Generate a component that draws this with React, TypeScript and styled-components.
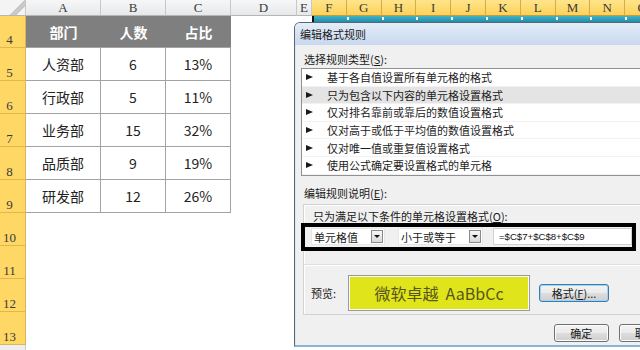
import React from "react";
import styled, { createGlobalStyle } from "styled-components";

const GlobalStyle = createGlobalStyle`
  html, body {
    margin: 0;
    padding: 0;
    background: #fff;
  }
  body {
    width: 640px;
    height: 350px;
    overflow: hidden;
    font-family: "Noto Sans CJK SC", "Liberation Sans", sans-serif;
  }
`;

type Column = { name: string; width: number; selected?: boolean };

const columns: Column[] = [
  { name: "A", width: 75 },
  { name: "B", width: 65 },
  { name: "C", width: 65 },
  { name: "D", width: 66 },
  { name: "E", width: 15 },
  ...["F", "G", "H", "I", "J", "K", "L", "M", "N", "O"].map((name) => ({
    name,
    width: 34.8,
    selected: true,
  })),
];

const rows = [
  { n: 4, h: 32 },
  { n: 5, h: 33 },
  { n: 6, h: 33 },
  { n: 7, h: 33 },
  { n: 8, h: 33 },
  { n: 9, h: 33 },
  { n: 10, h: 33 },
  { n: 11, h: 33 },
  { n: 12, h: 33 },
  { n: 13, h: 33 },
  { n: 14, h: 20, plain: true },
];

const tableData = [
  ["人资部", "6", "13%"],
  ["行政部", "5", "11%"],
  ["业务部", "15", "32%"],
  ["品质部", "9", "19%"],
  ["研发部", "12", "26%"],
];

const rules = [
  "基于各自值设置所有单元格的格式",
  "只为包含以下内容的单元格设置格式",
  "仅对排名靠前或靠后的数值设置格式",
  "仅对高于或低于平均值的数值设置格式",
  "仅对唯一值或重复值设置格式",
  "使用公式确定要设置格式的单元格",
];

export default function App() {
  return (
    <>
      <GlobalStyle />
      <Sheet>
        <ColumnBar>
          <Corner />
          {columns.map((c) => (
            <ColHead key={c.name} $width={c.width} $selected={c.selected}>
              {c.name}
            </ColHead>
          ))}
        </ColumnBar>
        <SheetBody>
          <RowBar>
            {rows.map((r) => (
              <RowHead key={r.n} $height={r.h} $plain={r.plain}>
                {r.n}
              </RowHead>
            ))}
          </RowBar>
          <CellArea>
            <DataTable>
              <HeadCell>部门</HeadCell>
              <HeadCell>人数</HeadCell>
              <HeadCell>占比</HeadCell>
              {tableData.map((row) =>
                row.map((v, i) => <Cell key={row[0] + i}>{v}</Cell>)
              )}
            </DataTable>
            <EmptyColumns />
            <SelectionStrip>
              {columns
                .filter((c) => c.selected)
                .map((c) => (
                  <StripSegment key={c.name} $width={c.width} />
                ))}
            </SelectionStrip>
          </CellArea>
        </SheetBody>

        <Dialog>
          <TitleBar>编辑格式规则</TitleBar>
          <DialogBody>
            <FieldLabel>
              选择规则类型(<u>S</u>):
            </FieldLabel>
            <RuleList>
              {rules.map((r, i) => (
                <RuleItem key={r} $active={i === 1}>
                  <Arrow />
                  {r}
                </RuleItem>
              ))}
            </RuleList>
            <FieldLabel $gap={9}>
              编辑规则说明(<u>E</u>):
            </FieldLabel>
            <RuleBox>
              <BoxLabel>
                只为满足以下条件的单元格设置格式(<u>O</u>):
              </BoxLabel>
              <ConditionRow>
                <Combo $width={74}>
                  <ComboText>单元格值</ComboText>
                  <DropButton />
                </Combo>
                <Combo $width={85}>
                  <ComboText>小于或等于</ComboText>
                  <DropButton />
                </Combo>
                <FormulaInput>=$C$7+$C$8+$C$9</FormulaInput>
              </ConditionRow>
              <Divider />
              <PreviewRow>
                <PreviewLabel>预览:</PreviewLabel>
                <PreviewSwatch>微软卓越&nbsp; AaBbCc</PreviewSwatch>
                <DialogButton $width={70} $focused>
                  格式(<u>F</u>)...
                </DialogButton>
              </PreviewRow>
            </RuleBox>
            <Footer>
              <DialogButton $width={65}>确定</DialogButton>
              <DialogButton $width={65}>取消</DialogButton>
            </Footer>
          </DialogBody>
        </Dialog>
      </Sheet>
    </>
  );
}

const Sheet = styled.div`
  position: relative;
  width: 640px;
  height: 350px;
  overflow: hidden;
  background: #fff;
`;

const ColumnBar = styled.div`
  display: flex;
  height: 16px;
  white-space: nowrap;
`;

const Corner = styled.div`
  flex: 0 0 26px;
  box-sizing: border-box;
  border-right: 1px solid #c8c8c8;
  border-bottom: 1px solid #b5b5b5;
  background: linear-gradient(135deg, #f4f4f4 62%, #c9c9c9 62%, #c9c9c9 78%, #f4f4f4 78%);
`;

const ColHead = styled.div<{ $width: number; $selected?: boolean }>`
  flex: 0 0 ${(p) => p.$width}px;
  box-sizing: border-box;
  height: 16px;
  border-right: 1px solid ${(p) => (p.$selected ? "#d8ab45" : "#c8c8c8")};
  border-bottom: 1px solid ${(p) => (p.$selected ? "#c99a38" : "#b5b5b5")};
  background: ${(p) =>
    p.$selected
      ? "linear-gradient(#ffe48a, #fbd35c)"
      : "linear-gradient(#f7f7f7, #e6e8eb)"};
  color: #3a3a3a;
  font-family: "Liberation Serif", "DejaVu Serif", serif;
  font-size: 13px;
  line-height: 16px;
  text-align: center;
`;

const SheetBody = styled.div`
  display: flex;
`;

const RowBar = styled.div`
  display: flex;
  flex-direction: column;
  flex: 0 0 26px;
`;

const RowHead = styled.div<{ $height: number; $plain?: boolean }>`
  box-sizing: border-box;
  height: ${(p) => p.$height}px;
  display: flex;
  align-items: flex-end;
  justify-content: center;
  padding: 0 6px 0 0;
  border-right: 1px solid ${(p) => (p.$plain ? "#c8c8c8" : "#e0b24c")};
  border-bottom: 1px solid ${(p) => (p.$plain ? "#c8c8c8" : "#e3b650")};
  background: ${(p) => (p.$plain ? "#eceef1" : "#fed764")};
  color: #3a3a3a;
  font-family: "Liberation Serif", "DejaVu Serif", serif;
  font-size: 13px;
  line-height: 15px;
`;

const CellArea = styled.div`
  display: flex;
  align-items: flex-start;
`;

const DataTable = styled.div`
  display: grid;
  grid-template-columns: 75px 65px 65px;
  grid-template-rows: 32px;
  grid-auto-rows: 33px;
  flex: 0 0 auto;
`;

const HeadCell = styled.div`
  box-sizing: border-box;
  display: flex;
  align-items: center;
  justify-content: center;
  background: #7f7f7f;
  border-bottom: 1px solid #a3a3a3;
  color: #fff;
  font-size: 14px;
  font-weight: 700;
`;

const Cell = styled.div`
  box-sizing: border-box;
  display: flex;
  align-items: center;
  justify-content: center;
  border-right: 1px solid #a3a3a3;
  border-bottom: 1px solid #a3a3a3;
  color: #222;
  font-size: 14px;
`;

const EmptyColumns = styled.div`
  flex: 0 0 81px;
`;

const SelectionStrip = styled.div`
  display: flex;
  height: 6px;
  border-left: 2px solid #111;
  box-sizing: border-box;
`;

const StripSegment = styled.div<{ $width: number }>`
  flex: 0 0 ${(p) => p.$width}px;
  height: 6px;
  background:
    linear-gradient(#ffffff, #ffffff) right 1px / 2px 3px no-repeat,
    linear-gradient(#43b3c9, #1f8ea8);
`;

const Dialog = styled.div`
  position: absolute;
  left: 294px;
  top: 22px;
  width: 380px;
  height: 325px;
  box-sizing: border-box;
  display: flex;
  flex-direction: column;
  border: 1px solid #56677c;
  border-bottom: 2px solid #86b5dd;
  border-top-left-radius: 6px;
  background: #f0f0f0;
  overflow: hidden;
  color: #1a1a1a;
  font-size: 11px;
`;

const TitleBar = styled.div`
  height: 22px;
  flex: 0 0 22px;
  display: flex;
  align-items: center;
  padding-left: 5px;
  background: linear-gradient(#e4edf8, #c8d8ed);
  color: #1b1b1b;
  font-size: 11px;
`;

const DialogBody = styled.div`
  flex: 1;
  display: flex;
  flex-direction: column;
  padding-left: 5px;
  border-left: 1px solid #dfe6ee;
`;

const FieldLabel = styled.div<{ $gap?: number }>`
  margin: ${(p) => p.$gap ?? 6}px 0 1px 3px;
  line-height: 16px;
  font-size: 11px;
`;

const RuleList = styled.div`
  width: 400px;
  border: 1px solid #8f9193;
  background: #fff;
`;

const RuleItem = styled.div<{ $active?: boolean }>`
  display: flex;
  align-items: center;
  height: 17.6px;
  box-sizing: border-box;
  padding-left: 4px;
  gap: 14px;
  border-bottom: 1px solid #f2f2f2;
  background: ${(p) => (p.$active ? "#e4e4e4" : "#fff")};
  font-size: 11px;
  color: #1c1c1c;
  white-space: nowrap;
`;

const Arrow = styled.span`
  width: 0;
  height: 0;
  border-top: 3.5px solid transparent;
  border-bottom: 3.5px solid transparent;
  border-left: 7px solid #1a1a1a;
`;

const RuleBox = styled.div`
  margin: 2px 0 0 2px;
  width: 400px;
  height: 111px;
  box-sizing: border-box;
  border: 1px solid #d3d3d3;
  box-shadow: inset 1px 1px 0 #fff;
  display: flex;
  flex-direction: column;
`;

const BoxLabel = styled.div`
  padding: 3px 0 0 9px;
  line-height: 16px;
  white-space: nowrap;
`;

const ConditionRow = styled.div`
  margin: -1px 0 0 -3px;
  width: 335px;
  height: 28px;
  box-sizing: border-box;
  border: 4px solid #000;
  display: flex;
  align-items: center;
  padding-left: 6px;
  gap: 13px;
`;

const Combo = styled.div<{ $width: number }>`
  width: ${(p) => p.$width}px;
  height: 17px;
  box-sizing: border-box;
  display: flex;
  align-items: center;
  justify-content: space-between;
  background: #fff;
  border: 1px solid #e6e6e6;
  padding-right: 1px;
`;

const ComboText = styled.span`
  padding-left: 2px;
  font-size: 11px;
  white-space: nowrap;
`;

const DropButton = styled.span`
  width: 12px;
  height: 13px;
  box-sizing: border-box;
  display: flex;
  align-items: center;
  justify-content: center;
  border: 1px solid #8a8a8a;
  background: linear-gradient(#f7f7f7, #d9d9d9);
  &::after {
    content: "";
    border-left: 3px solid transparent;
    border-right: 3px solid transparent;
    border-top: 3px solid #111;
  }
`;

const FormulaInput = styled.div`
  margin-left: -3px;
  width: 139px;
  height: 17px;
  box-sizing: border-box;
  display: flex;
  align-items: center;
  padding-left: 5px;
  background: #fff;
  border: 1px solid #d0d0d0;
  font-family: "Liberation Sans", sans-serif;
  font-size: 9.6px;
  color: #111;
  white-space: nowrap;
`;

const Divider = styled.div`
  margin-top: 13px;
  height: 1px;
  background: #dedede;
  border-bottom: 1px solid #fff;
`;

const PreviewRow = styled.div`
  margin-top: 9px;
  height: 36px;
  display: flex;
  align-items: center;
  padding-left: 7px;
`;

const PreviewLabel = styled.span`
  width: 37px;
  font-size: 11px;
`;

const PreviewSwatch = styled.div`
  width: 182px;
  height: 36px;
  box-sizing: border-box;
  display: flex;
  align-items: center;
  justify-content: center;
  border: 1px solid #9a9a9a;
  box-shadow: inset 0 0 0 1px #fff;
  background: #e0e41b;
  color: #56561a;
  font-size: 16px;
  white-space: nowrap;
`;

const DialogButton = styled.div<{ $width: number; $focused?: boolean }>`
  width: ${(p) => p.$width}px;
  height: 18px;
  box-sizing: border-box;
  display: flex;
  align-items: center;
  justify-content: center;
  margin-left: 9px;
  border: 1px solid ${(p) => (p.$focused ? "#3d7bad" : "#707070")};
  border-radius: 3px;
  background: linear-gradient(#f3f3f3 0%, #ebebeb 48%, #dddddd 52%, #cfcfcf 100%);
  box-shadow: inset 0 0 0 1px ${(p) => (p.$focused ? "#9fd3f0" : "#fcfcfc")};
  font-size: 11px;
  color: #1a1a1a;
  white-space: nowrap;
`;

const Footer = styled.div`
  display: flex;
  margin-top: 9px;
  padding-left: 244px;
  gap: 1px;
`;
